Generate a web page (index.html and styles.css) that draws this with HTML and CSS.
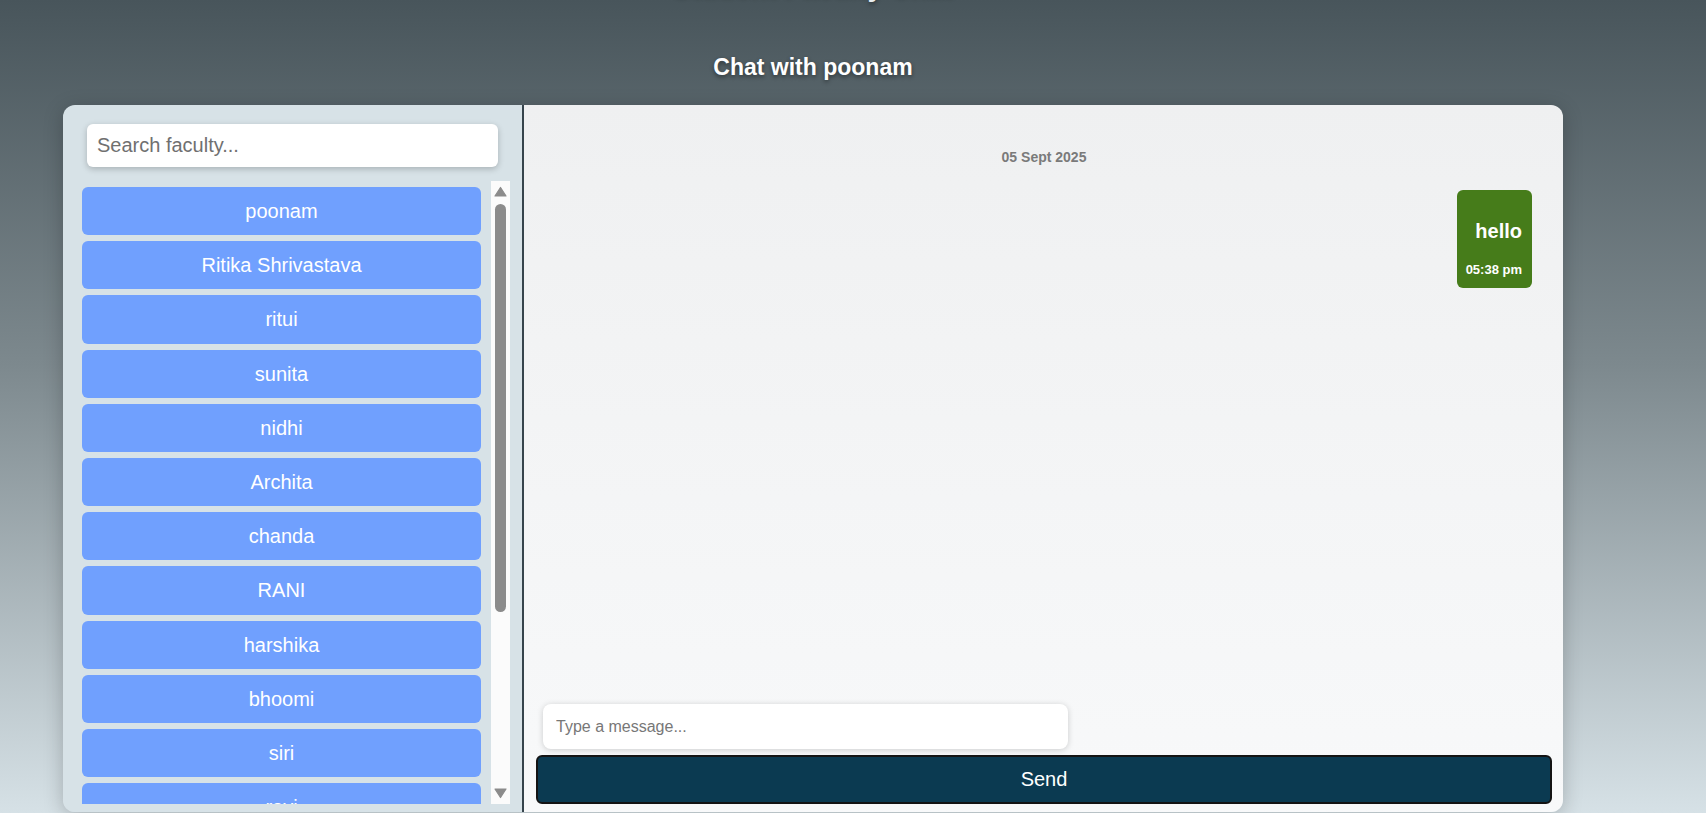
FILE: index.html
```html
<!DOCTYPE html>
<html lang="en">
<head>
<meta charset="utf-8">
<title>Chat</title>
<link rel="stylesheet" href="styles.css">
</head>
<body>
<div class="page">
  <h1 class="app-title">Student Faculty Chat</h1>
  <h2 class="chat-title">Chat with poonam</h2>
  <div class="card">
    <aside class="sidebar">
      <input class="search" type="text" placeholder="Search faculty...">
      <div class="list-wrap">
        <div class="faculty-list">
          <div class="faculty">poonam</div>
          <div class="faculty">Ritika Shrivastava</div>
          <div class="faculty">ritui</div>
          <div class="faculty">sunita</div>
          <div class="faculty">nidhi</div>
          <div class="faculty">Archita</div>
          <div class="faculty">chanda</div>
          <div class="faculty">RANI</div>
          <div class="faculty">harshika</div>
          <div class="faculty">bhoomi</div>
          <div class="faculty">siri</div>
          <div class="faculty">ravi</div>
          <div class="faculty">kavya</div>
          <div class="faculty">megha</div>
          <div class="faculty">pooja</div>
          <div class="faculty">neha</div>
        </div>
        <div class="scrollbar">
          <svg class="sb-arrow" width="19" height="19" viewBox="0 0 19 19"><path d="M4 15 L9.5 6.5 L15 15 Z" fill="#8b8b8b" stroke="#8b8b8b" stroke-width="1.2" stroke-linejoin="round"/></svg>
          <div class="sb-thumb"></div>
          <div class="sb-space"></div>
          <svg class="sb-arrow" width="19" height="19" viewBox="0 0 19 19"><path d="M4 4 L9.5 12.5 L15 4 Z" fill="#8b8b8b" stroke="#8b8b8b" stroke-width="1.2" stroke-linejoin="round"/></svg>
        </div>
      </div>
    </aside>
    <section class="chat">
      <div class="messages">
        <div class="date">05 Sept 2025</div>
        <div class="bubble">
          <p class="bubble-text">hello</p>
          <span class="bubble-time">05:38 pm</span>
        </div>
      </div>
      <input class="msg-input" type="text" placeholder="Type a message...">
      <button class="send" type="button">Send</button>
    </section>
  </div>
</div>
</body>
</html>
```
FILE: styles.css
```css
* { box-sizing: border-box; }

html, body {
  margin: 0;
  height: 813px;
  overflow: hidden;
}

body {
  font-family: "Liberation Sans", Arial, sans-serif;
  background: linear-gradient(to bottom, #48555b 0%, #7d898e 45%, #d6e1e6 100%);
}

.page {
  width: 1500px;
  margin-left: 63px;
  display: flex;
  flex-direction: column;
}

.app-title {
  margin: -29px 0 0;
  height: 32px;
  font-size: 28px;
  line-height: 32px;
  font-weight: bold;
  color: #e9eef0;
  text-align: center;
  text-shadow: 0 2px 4px rgba(0, 0, 0, 0.4);
}

.chat-title {
  margin: 51px 0 0;
  font-size: 23px;
  line-height: 26px;
  font-weight: bold;
  color: #ffffff;
  text-align: center;
  text-shadow: 0 2px 4px rgba(0, 0, 0, 0.45);
}

.card {
  margin-top: 25px;
  height: 707px;
  display: flex;
  border-radius: 12px;
  overflow: hidden;
  box-shadow: 0 4px 20px rgba(0, 0, 0, 0.22);
}

.sidebar {
  width: 459px;
  flex: none;
  background: #d7e2e7;
  padding: 19px 12px 8px 19px;
  display: flex;
  flex-direction: column;
}

.search {
  height: 43px;
  margin: 0 12px 14px 5px;
  border: none;
  border-radius: 6px;
  background: #ffffff;
  padding: 0 10px;
  font-family: inherit;
  font-size: 20px;
  color: #333;
  box-shadow: 0 2px 6px rgba(0, 0, 0, 0.22);
  outline: none;
}

.search::placeholder { color: #707070; }

.list-wrap {
  flex: 1;
  min-height: 0;
  display: flex;
}

.faculty-list {
  flex: 1;
  min-width: 0;
  overflow: hidden;
  padding: 6px 10px 0 0;
}

.scrollbar {
  width: 19px;
  flex: none;
  background: #fbfbfb;
  display: flex;
  flex-direction: column;
}

.sb-arrow {
  display: block;
  flex: none;
}

.sb-thumb {
  height: 408px;
  margin: 4px 4px 0;
  border-radius: 6px;
  background: #8b8b8b;
  flex: none;
}

.sb-space { flex: 1; }

.faculty {
  height: 48.2px;
  margin-bottom: 6px;
  border-radius: 6px;
  background: #70a0fe;
  color: #ffffff;
  font-size: 20px;
  line-height: 48px;
  text-align: center;
}

.chat {
  flex: 1;
  border-left: 2px solid #36444c;
  background: linear-gradient(to bottom, #eff0f1, #f8f9fa);
  padding: 0 11px 8px 12px;
  display: flex;
  flex-direction: column;
}

.messages {
  flex: 1;
  min-height: 0;
  padding: 44px 20px 0 0;
  display: flex;
  flex-direction: column;
}

.date {
  text-align: center;
  font-size: 14px;
  line-height: 16px;
  font-weight: bold;
  color: #7a7a7a;
  padding-left: 20px;
}

.bubble {
  align-self: flex-end;
  margin-top: 25px;
  background: #467c1a;
  border-radius: 6px;
  padding: 0 10px 11px 9px;
  color: #ffffff;
  display: flex;
  flex-direction: column;
  align-items: flex-end;
}

.bubble-text {
  margin: 30px 0 19px;
  font-size: 20px;
  line-height: 23px;
  font-weight: bold;
}

.bubble-time {
  font-size: 13px;
  line-height: 15px;
  font-weight: bold;
}

.msg-input {
  width: 525px;
  height: 45px;
  margin: 0 0 6px 7px;
  border: none;
  border-radius: 8px;
  background: #ffffff;
  padding: 0 13px;
  font-family: inherit;
  font-size: 16px;
  color: #333;
  box-shadow: 0 1px 6px rgba(0, 0, 0, 0.18);
  outline: none;
}

.msg-input::placeholder { color: #777777; }

.send {
  height: 49px;
  border: 2px solid #141414;
  border-radius: 6px;
  background: #0b3a51;
  color: #ffffff;
  font-family: inherit;
  font-size: 20px;
  cursor: pointer;
}
```
